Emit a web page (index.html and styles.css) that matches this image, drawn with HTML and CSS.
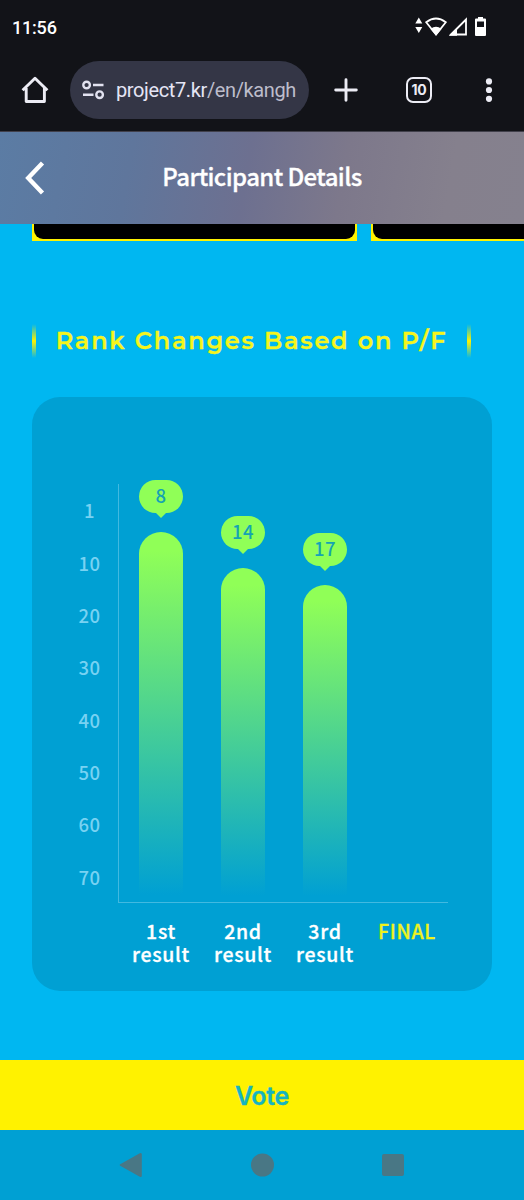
FILE: index.html
```html
<!DOCTYPE html>
<html lang="en">
<head>
    <meta charset="UTF-8">
    <meta name="viewport" content="width=device-width, initial-scale=1.0">
    <title>Participant Details</title>
    <link rel="stylesheet" href="styles.css">
</head>
<body>
    <!-- Status Bar -->
    <div class="status-bar">
        <span class="status-time">11:56</span>
        <svg class="status-icons" width="74" height="24" viewBox="0 0 74 24">
            <g fill="#fff">
                <path d="M5.8 4.5L9.3 10.5H2.3zM5.8 20L2.3 14H9.3z"/>
                <path d="M23 22.5L17.5 16Q23 11.5 28.5 16z"/>
                <path d="M36 22.7L44 14.7V22.7z"/>
                <path fill-rule="evenodd" d="M63 5.5H65V4H70V5.5H72Q73 5.5 73 6.5V22Q73 23 72 23H63Q62 23 62 22V6.5Q62 5.5 63 5.5zM64 8.5V14H71V8.5z"/>
            </g>
            <g fill="none" stroke="#fff" stroke-width="1.8">
                <path d="M23 21.5L13.2 9.2Q23 1.8 32.8 9.2z"/>
                <path d="M38 21.5L53 6.5V21.5z"/>
            </g>
        </svg>
    </div>

    <!-- Browser Toolbar -->
    <div class="toolbar">
        <svg class="icon-home" width="28" height="28" viewBox="0 0 28 28" fill="none" stroke="#ececf4" stroke-width="2.9" stroke-linejoin="round">
            <path d="M1.6 14.3L14 2.2L26.4 14.3M5.2 12V25.5H23.4V12"/>
        </svg>
        <div class="address-bar">
            <svg width="24" height="20" viewBox="0 0 24 20" fill="none" stroke="#e2e2f0" stroke-width="2.4">
                <circle cx="5.6" cy="5" r="3.3"/>
                <path d="M12 5H22.5M2 14.7H12.5"/>
                <circle cx="18.6" cy="14.7" r="3.3"/>
            </svg>
            <span class="address">project7.kr<span class="address-path">/en/kangh</span></span>
        </div>
        <svg class="icon-plus" width="24" height="24" viewBox="0 0 24 24" stroke="#ececf4" stroke-width="2.9" stroke-linecap="round">
            <path d="M12 1.7V22.3M1.7 12H22.3"/>
        </svg>
        <div class="tab-count">10</div>
        <svg class="icon-menu" width="8" height="24" viewBox="0 0 8 24" fill="#ececf4">
            <circle cx="4" cy="3.4" r="3.1"/>
            <circle cx="4" cy="12" r="3.1"/>
            <circle cx="4" cy="20.8" r="3.1"/>
        </svg>
    </div>

    <!-- Page Header -->
    <header class="page-header">
        <svg class="icon-back" width="20" height="34" viewBox="0 0 20 34" fill="none" stroke="#fff" stroke-width="4.4">
            <path d="M17.5 2L3.2 17L17.5 32"/>
        </svg>
        <h1>Participant Details</h1>
    </header>

    <main class="content">
        <!-- Video Cards -->
        <div class="video-list">
            <div class="video-card"><div class="video-inner"></div></div>
            <div class="video-card"><div class="video-inner"></div></div>
        </div>

        <h2 class="section-title"><span>Rank Changes Based on P/F</span></h2>

        <!-- Rank Chart -->
        <div class="chart-card">
            <div class="y-axis">
                <span>1</span>
                <span>10</span>
                <span>20</span>
                <span>30</span>
                <span>40</span>
                <span>50</span>
                <span>60</span>
                <span>70</span>
            </div>
            <div class="plot">
                <div class="plot-column">
                    <div class="bubble">8</div>
                    <div class="bar" style="height: 370px"></div>
                </div>
                <div class="plot-column">
                    <div class="bubble">14</div>
                    <div class="bar" style="height: 334px"></div>
                </div>
                <div class="plot-column">
                    <div class="bubble">17</div>
                    <div class="bar" style="height: 317px"></div>
                </div>
                <div class="plot-column"></div>
            </div>
            <div class="x-axis">
                <span>1st<br>result</span>
                <span>2nd<br>result</span>
                <span>3rd<br>result</span>
                <span class="final">FINAL</span>
            </div>
        </div>
    </main>

    <button class="vote-button">Vote</button>

    <!-- System Navigation -->
    <nav class="system-nav">
        <svg width="24" height="26" viewBox="0 0 24 26"><path d="M1.2 12.2L20.8 1.2Q22.8 .2 22.8 2.4V23.6Q22.8 25.8 20.8 24.8L1.2 13.8Q0 13 1.2 12.2z"/></svg>
        <svg width="24" height="24" viewBox="0 0 24 24"><circle cx="11.5" cy="12" r="11.5"/></svg>
        <svg width="22" height="22" viewBox="0 0 22 22"><rect width="22" height="22" rx="2"/></svg>
    </nav>
</body>
</html>
```
FILE: styles.css
```css
* {
    margin: 0;
    padding: 0;
    box-sizing: border-box;
}

body {
    display: flex;
    flex-direction: column;
    height: 1200px;
    overflow: hidden;
    background: #00b7f1;
    color: #fff;
    font-family: "Noto Sans CJK KR", sans-serif;
}

/* Browser chrome */
.status-bar {
    display: flex;
    justify-content: space-between;
    flex: none;
    height: 55px;
    padding: 13px 37px 0 12px;
    background: #121318;
}

.status-time {
    font: 500 18px/29px Roboto, sans-serif;
    letter-spacing: -0.2px;
}

.toolbar {
    display: flex;
    align-items: center;
    flex: none;
    height: 77px;
    padding: 0 31px 6px 21px;
    background: #121318;
    border-bottom: 1px solid #41404b;
}

.address-bar {
    display: flex;
    align-items: center;
    gap: 11px;
    width: 239px;
    height: 58px;
    margin-left: 21px;
    padding-left: 11px;
    border-radius: 29px;
    background: #343646;
}

.address {
    font: 400 20px/28px Roboto, sans-serif;
    color: #e5e5f5;
    letter-spacing: -0.38px;
    white-space: nowrap;
}

.address-path {
    color: #bdbdcb;
}

.icon-plus {
    margin-left: 25px;
}

.tab-count {
    width: 26px;
    height: 26px;
    margin-left: 48px;
    border: 2px solid #ececf4;
    border-radius: 7px;
    color: #ececf4;
    font: 700 14px/22px Inter, sans-serif;
    letter-spacing: -0.2px;
    text-align: center;
}

.icon-menu {
    margin-left: auto;
}

/* Page header */
.page-header {
    display: grid;
    grid-template-columns: 70px 1fr 70px;
    align-items: center;
    flex: none;
    height: 92px;
    background: linear-gradient(100deg, #5b7ca4 0%, #5f769c 25%, #6d7090 47%, #7d788b 65%, #85808d 85%, #85818e 100%);
}

.icon-back {
    margin-left: 25px;
}

.page-header h1 {
    padding-bottom: 4px;
    font-size: 24px;
    font-weight: 500;
    line-height: 36px;
    letter-spacing: -0.6px;
    text-align: center;
    white-space: nowrap;
    -webkit-text-stroke: 0.3px;
}

/* Content */
.content {
    flex: 1;
    min-height: 0;
    padding: 0 32px;
}

.video-list {
    display: flex;
    gap: 14px;
    width: 492px;
    height: 17px;
    overflow: hidden;
}

.video-card {
    flex: none;
    width: 325px;
    height: 17px;
    padding: 0 2px 2px;
    background: #fff200;
}

.video-inner {
    height: 15px;
    border-radius: 0 0 9px 9px;
    background: #000;
}

.section-title {
    display: flex;
    align-items: center;
    justify-content: space-between;
    width: 439px;
    height: 34px;
    margin-top: 83px;
    color: #f5f51c;
    font: 600 24px/34px Montserrat, sans-serif;
    letter-spacing: 1.75px;
    white-space: nowrap;
    -webkit-text-stroke: 0.3px;
}

.section-title::before,
.section-title::after {
    content: "";
    width: 4px;
    height: 34px;
    background: linear-gradient(transparent, #fff200 50%, transparent);
}

/* Chart */
.chart-card {
    display: grid;
    grid-template-columns: 57px 330px;
    grid-template-rows: 419px auto;
    height: 594px;
    margin-top: 39px;
    padding: 87px 0 0 29px;
    border-radius: 28px;
    background: #00a0d3;
}

.y-axis {
    display: grid;
    grid-template-rows: repeat(8, 1fr);
    align-items: center;
    color: #78d2f2;
    font-size: 18.5px;
    font-weight: 500;
    line-height: 24px;
    letter-spacing: 0.5px;
    text-align: center;
}

.plot,
.x-axis {
    display: grid;
    grid-template-columns: repeat(4, 1fr);
}

.plot {
    padding-left: 1px;
    border-left: 1px solid #42b9e0;
    border-bottom: 1px solid #42b9e0;
}

.plot-column {
    display: flex;
    flex-direction: column;
    align-items: center;
    justify-content: flex-end;
    height: 418px;
}

.bubble {
    position: relative;
    flex: none;
    width: 44px;
    height: 33px;
    margin-bottom: 19px;
    border-radius: 17px;
    background: #90ff57;
    color: #15a3b3;
    font-size: 18.5px;
    font-weight: 500;
    line-height: 31px;
    letter-spacing: 0.5px;
    text-align: center;
}

.bubble::after {
    content: "";
    position: absolute;
    top: 32px;
    left: 16px;
    border: 6px solid transparent;
    border-top-color: #90ff57;
    border-bottom: 0;
}

.bar {
    flex: none;
    width: 44px;
    border-radius: 22px 22px 0 0;
    background: linear-gradient(#90ff57 5%, #00a0d3 98%);
}

.x-axis {
    grid-column: 2;
    padding: 16px 0 0 2px;
    font-size: 19.5px;
    font-weight: 500;
    line-height: 23px;
    letter-spacing: 0.7px;
    text-align: center;
    -webkit-text-stroke: 0.3px;
}

.final {
    color: #eff21c;
}

/* Bottom bars */
.vote-button {
    flex: none;
    height: 70px;
    padding-top: 2px;
    border: none;
    background: #fff200;
    color: #16b4c1;
    font: 600 25px/36px Inter, sans-serif;
    letter-spacing: -0.3px;
    -webkit-text-stroke: 0.3px;
}

.system-nav {
    display: flex;
    align-items: center;
    justify-content: space-between;
    flex: none;
    height: 70px;
    padding: 0 120px 0 119px;
    background: #00a0d3;
    fill: #497785;
}
```
